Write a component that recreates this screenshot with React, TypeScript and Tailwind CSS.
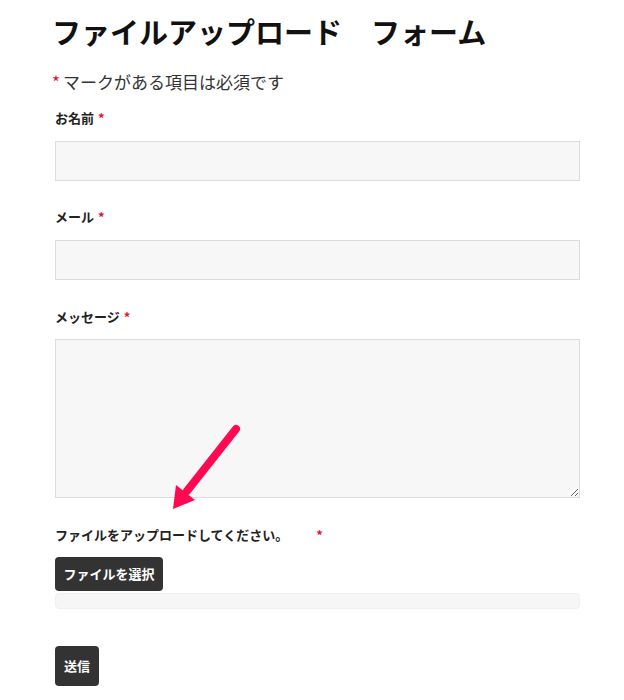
import { useState } from 'react';

const font = { fontFamily: '"Noto Sans CJK JP", "Noto Sans", sans-serif' };

function Required() {
    return <span className="ml-[4px] text-[#e8112d] font-bold">*</span>;
}

export default function App() {
    const [form, setForm] = useState({ name: '', email: '', message: '' });

    return (
        <div className="relative min-h-[700px] w-[624px] bg-white" style={font}>
            <form className="flex w-[580px] flex-col pl-[55px] pt-[11px]" onSubmit={e => e.preventDefault()}>
                <h1 className="-ml-[3px] h-[40px] text-[29px] font-bold leading-[40px] text-[#111]">ファイルアップロード　フォーム</h1>
                <p className="-ml-[3px] mt-[19px] text-[17px] leading-[24px] text-[#333]">
                    <span className="mr-[3px] text-[#e8112d]">*</span>マークがある項目は必須です
                </p>

                <label className="mt-[14px] text-[13px] font-bold leading-[20px] text-[#222]">お名前<Required /></label>
                <input
                    className="mt-[13px] h-[40px] w-full border border-[#dcdcdc] bg-[#f7f7f7] px-3 text-sm outline-none"
                    value={form.name}
                    onChange={e => setForm({ ...form, name: e.target.value })}
                />

                <label className="mt-[26px] text-[13px] font-bold leading-[20px] text-[#222]">メール<Required /></label>
                <input
                    type="email"
                    className="mt-[13px] h-[40px] w-full border border-[#dcdcdc] bg-[#f7f7f7] px-3 text-sm outline-none"
                    value={form.email}
                    onChange={e => setForm({ ...form, email: e.target.value })}
                />

                <label className="mt-[27px] text-[13px] font-bold leading-[20px] text-[#222]">メッセージ<Required /></label>
                <textarea
                    className="mt-[12px] h-[159px] w-full border border-[#dcdcdc] bg-[#f7f7f7] p-3 text-sm outline-none"
                    value={form.message}
                    onChange={e => setForm({ ...form, message: e.target.value })}
                />

                <label className="mt-[27px] text-[13px] font-bold leading-[20px] text-[#222]">
                    ファイルをアップロードしてください。<span className="ml-[28px] text-[#e8112d]">*</span>
                </label>
                <div className="mt-[12px]">
                    <button type="button" className="h-[34px] w-[108px] rounded-[4px] bg-[#333] text-[13px] font-bold text-white">ファイルを選択</button>
                </div>
                <div className="mt-[2px] h-[16px] w-full rounded-[4px] border border-[#f0f0f0] bg-[#f6f6f6]" />

                <div className="mt-[37px]">
                    <button type="submit" className="h-[40px] w-[44px] rounded-[4px] bg-[#333] text-[13px] font-bold text-white">送信</button>
                </div>
            </form>

            <svg className="pointer-events-none absolute left-0 top-0" width="624" height="700" viewBox="0 0 624 700">
                <line x1="236" y1="429" x2="187" y2="491" stroke="#ff0a52" strokeWidth="8" strokeLinecap="round" />
                <polygon points="173,509 176,485 195,500" fill="#ff0a52" />
            </svg>
        </div>
    );
}
